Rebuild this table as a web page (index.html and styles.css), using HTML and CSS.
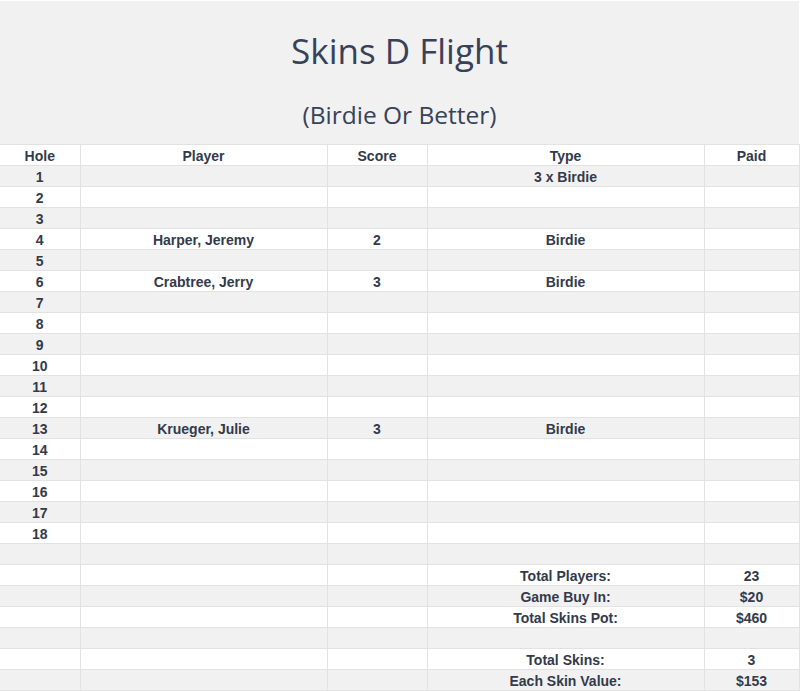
FILE: index.html
```html
<!DOCTYPE html>
<html>
<head>
<meta charset="utf-8">
<link rel="stylesheet" href="styles.css">
</head>
<body>
<header class="banner">
  <h1 class="title">Skins D Flight</h1>
  <h2 class="subtitle">(Birdie Or Better)</h2>
</header>
<table class="skins">
  <colgroup>
    <col class="c-hole"><col class="c-player"><col class="c-score"><col class="c-type"><col class="c-paid">
  </colgroup>
  <thead>
    <tr><th>Hole</th><th>Player</th><th>Score</th><th>Type</th><th>Paid</th></tr>
  </thead>
  <tbody>
    <tr class="alt"><td>1</td><td></td><td></td><td>3 x Birdie</td><td></td></tr>
    <tr><td>2</td><td></td><td></td><td></td><td></td></tr>
    <tr class="alt"><td>3</td><td></td><td></td><td></td><td></td></tr>
    <tr><td>4</td><td>Harper, Jeremy</td><td>2</td><td>Birdie</td><td></td></tr>
    <tr class="alt"><td>5</td><td></td><td></td><td></td><td></td></tr>
    <tr><td>6</td><td>Crabtree, Jerry</td><td>3</td><td>Birdie</td><td></td></tr>
    <tr class="alt"><td>7</td><td></td><td></td><td></td><td></td></tr>
    <tr><td>8</td><td></td><td></td><td></td><td></td></tr>
    <tr class="alt"><td>9</td><td></td><td></td><td></td><td></td></tr>
    <tr><td>10</td><td></td><td></td><td></td><td></td></tr>
    <tr class="alt"><td>11</td><td></td><td></td><td></td><td></td></tr>
    <tr><td>12</td><td></td><td></td><td></td><td></td></tr>
    <tr class="alt"><td>13</td><td>Krueger, Julie</td><td>3</td><td>Birdie</td><td></td></tr>
    <tr><td>14</td><td></td><td></td><td></td><td></td></tr>
    <tr class="alt"><td>15</td><td></td><td></td><td></td><td></td></tr>
    <tr><td>16</td><td></td><td></td><td></td><td></td></tr>
    <tr class="alt"><td>17</td><td></td><td></td><td></td><td></td></tr>
    <tr><td>18</td><td></td><td></td><td></td><td></td></tr>
    <tr class="alt"><td></td><td></td><td></td><td></td><td></td></tr>
    <tr><td></td><td></td><td></td><td>Total Players:</td><td>23</td></tr>
    <tr class="alt"><td></td><td></td><td></td><td>Game Buy In:</td><td>$20</td></tr>
    <tr><td></td><td></td><td></td><td>Total Skins Pot:</td><td>$460</td></tr>
    <tr class="alt"><td></td><td></td><td></td><td></td><td></td></tr>
    <tr><td></td><td></td><td></td><td>Total Skins:</td><td>3</td></tr>
    <tr class="alt"><td></td><td></td><td></td><td>Each Skin Value:</td><td>$153</td></tr>
  </tbody>
</table>
</body>
</html>
```

FILE: styles.css
```css
html, body {
  margin: 0;
  padding: 0;
  background: #ffffff;
}
body {
  width: 800px;
  font-family: "Liberation Sans", Arial, sans-serif;
  color: #353c4c;
}
.banner {
  box-sizing: border-box;
  height: 144px;
  margin-top: 1px;
  width: 799px;
  background: #f1f1f1;
  display: flex;
  flex-direction: column;
  align-items: center;
  padding-top: 26px;
}
.title {
  margin: 0;
  font-family: "Open Sans", "Noto Sans", sans-serif;
  font-weight: 400;
  font-size: 35px;
  line-height: 48px;
  color: #37425a;
}
.subtitle {
  margin: 23px 0 0 0;
  font-family: "Open Sans", "Noto Sans", sans-serif;
  font-weight: 400;
  font-size: 24.5px;
  line-height: 34px;
  color: #37425a;
}
.skins {
  table-layout: fixed;
  border-collapse: collapse;
  width: 799px;
  margin-top: -1px;
}
.c-hole { width: 80px; }
.c-player { width: 247px; }
.c-score { width: 100px; }
.c-type { width: 277px; }
.c-paid { width: 95px; }
.skins th, .skins td {
  height: 18px;
  padding: 2px 0 0 0;
  border: 1px solid #e2e2e2;
  font-size: 14px;
  font-weight: 700;
  line-height: 18px;
  text-align: center;
  color: #333a4b;
  white-space: nowrap;
  overflow: hidden;
}
.skins th:first-child, .skins td:first-child {
  border-left: none;
}
.skins thead th {
  background: #ffffff;
}
.skins tr.alt td {
  background: #f1f1f1;
}
```
